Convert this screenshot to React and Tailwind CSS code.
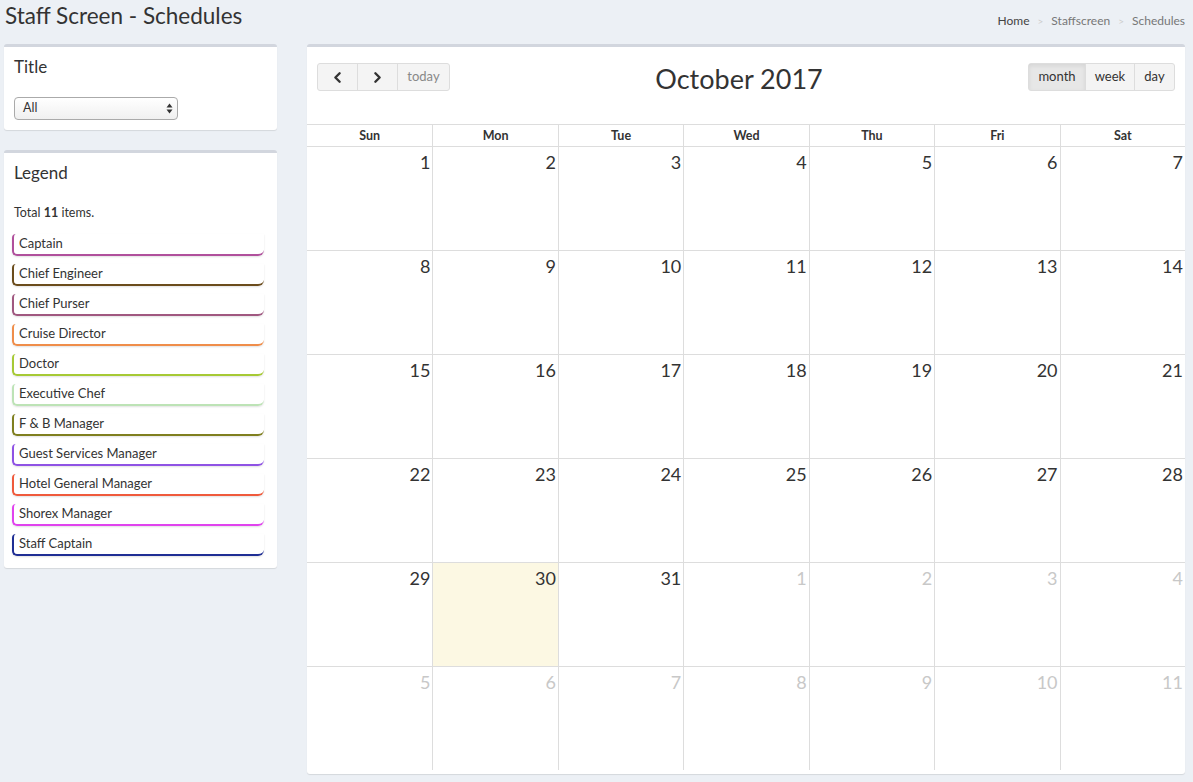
import { ChevronLeft, ChevronRight } from "lucide-react";

const LEGEND = [
  { name: "Captain", color: "#b0509c" },
  { name: "Chief Engineer", color: "#6b4c1c" },
  { name: "Chief Purser", color: "#a05880" },
  { name: "Cruise Director", color: "#ef8d4a" },
  { name: "Doctor", color: "#a6c935" },
  { name: "Executive Chef", color: "#bde3b6" },
  { name: "F & B Manager", color: "#7f7f1f" },
  { name: "Guest Services Manager", color: "#8f52e4" },
  { name: "Hotel General Manager", color: "#ef5a3c" },
  { name: "Shorex Manager", color: "#e043ee" },
  { name: "Staff Captain", color: "#1f2e94" },
];

const DAYS = ["Sun", "Mon", "Tue", "Wed", "Thu", "Fri", "Sat"];

// October 2017 starts on a Sunday
const WEEKS = Array.from({ length: 6 }, (_, w) =>
  Array.from({ length: 7 }, (_, d) => {
    const n = w * 7 + d + 1;
    if (n <= 31) return { day: n, other: false };
    return { day: n - 31, other: true };
  })
);

const Box = ({ children, className = "" }) => (
  <div className={`bg-white border-t-[3px] border-[#d2d6de] rounded-[3px] shadow-[0_1px_1px_rgba(0,0,0,0.1)] ${className}`}>
    {children}
  </div>
);

const App = () => {
  return (
    <div
      className="min-h-[782px] bg-[#ecf0f5] text-[#333]"
      style={{ fontFamily: "Lato, 'Open Sans', sans-serif" }}
    >
      <div className="flex items-start justify-between pl-[5px] pr-[8px] h-[44px]">
        <h1 className="text-[22.5px] leading-none pt-[5px] text-[#333]">Staff Screen - Schedules</h1>
        <div className="flex items-center gap-[8px] text-[12px] pt-[12px]">
          <span className="text-[#444]">Home</span>
          <span className="text-[#ccc] text-[10px]">&gt;</span>
          <span className="text-[#777]">Staffscreen</span>
          <span className="text-[#ccc] text-[10px]">&gt;</span>
          <span className="text-[#777]">Schedules</span>
        </div>
      </div>

      <div className="flex items-start pl-[4px]">
        <div className="w-[273px] flex flex-col gap-[20px]">
          <Box className="h-[86px] px-[10px]">
            <div className="text-[17px] leading-none pt-[11px]">Title</div>
            <div className="mt-[22px] w-[164px] h-[23px] border border-[#aaa] rounded-[4px] bg-gradient-to-b from-white to-[#f0f0f0] flex items-center justify-between pl-[8px] pr-[4px] text-[12.5px]">
              <span>All</span>
              <svg width="7" height="11" viewBox="0 0 7 11">
                <path d="M3.5 0.5 L6.5 4.5 L0.5 4.5 Z" fill="#333" />
                <path d="M3.5 10.5 L6.5 6.5 L0.5 6.5 Z" fill="#333" />
              </svg>
            </div>
          </Box>

          <Box className="h-[418px] px-[10px]">
            <div className="text-[17px] leading-none pt-[11px]">Legend</div>
            <div className="text-[12.5px] mt-[26px] leading-none">
              Total <b>11</b> items.
            </div>
            <div className="mt-[14px] flex flex-col gap-[8px] -ml-[2px]">
              {LEGEND.map((item) => (
                <div
                  key={item.name}
                  className="w-[252px] h-[22px] flex items-center pl-[5px] text-[13px] text-[#333] border-l-2 border-b-2 rounded-bl-[5px] rounded-br-[6px] rounded-tl-[4px] shadow-[0_1px_2px_rgba(0,0,0,0.12)]"
                  style={{ borderColor: item.color }}
                >
                  {item.name}
                </div>
              ))}
            </div>
          </Box>
        </div>

        <Box className="ml-[30px] w-[878px] pb-[4px]">
          <div className="flex items-start justify-between px-[10px] pt-[16px] h-[77px]">
            <div className="flex h-[28px] rounded-[3px] border border-[#ddd] bg-[#f4f4f4] text-[13px] text-[#888]">
              <div className="w-[40px] flex items-center justify-center border-r border-[#ddd] text-[#333]">
                <ChevronLeft size={17} strokeWidth={3.4} />
              </div>
              <div className="w-[40px] flex items-center justify-center border-r border-[#ddd] text-[#333]">
                <ChevronRight size={17} strokeWidth={3.4} />
              </div>
              <div className="w-[51px] flex items-center justify-center">today</div>
            </div>
            <div className="text-[27px] leading-none pt-[2px] text-[#333]">October 2017</div>
            <div className="flex h-[28px] rounded-[3px] border border-[#ddd] bg-[#f4f4f4] text-[13px] text-[#333]">
              <div className="w-[57px] flex items-center justify-center border-r border-[#ddd] bg-[#e7e7e7] shadow-[inset_0_2px_4px_rgba(0,0,0,0.08)]">month</div>
              <div className="w-[49px] flex items-center justify-center border-r border-[#ddd]">week</div>
              <div className="w-[39px] flex items-center justify-center">day</div>
            </div>
          </div>

          <div className="grid grid-cols-7 border-t border-[#ddd]">
            {DAYS.map((d, i) => (
              <div
                key={d}
                className={`h-[22px] flex items-center justify-center text-[12.5px] font-bold text-[#333] border-b border-[#ddd] ${i > 0 ? "border-l" : ""}`}
              >
                <span className="pt-[2px]">{d}</span>
              </div>
            ))}
          </div>

          {WEEKS.map((week, w) => (
            <div key={w} className={`grid grid-cols-7 ${w < 5 ? "border-b border-[#ddd]" : ""}`}>
              {week.map((cell, i) => {
                const today = !cell.other && cell.day === 30;
                return (
                  <div
                    key={i}
                    className={`h-[103px] border-[#ddd] ${i > 0 ? "border-l" : ""} ${today ? "bg-[#fcf8e3]" : ""}`}
                  >
                    <div
                      className={`text-right pr-[2px] pt-[6px] text-[18px] leading-none ${cell.other ? "text-[#c8c8c8]" : "text-[#333]"}`}
                    >
                      {cell.day}
                    </div>
                  </div>
                );
              })}
            </div>
          ))}
        </Box>
      </div>
    </div>
  );
};

export default App;
